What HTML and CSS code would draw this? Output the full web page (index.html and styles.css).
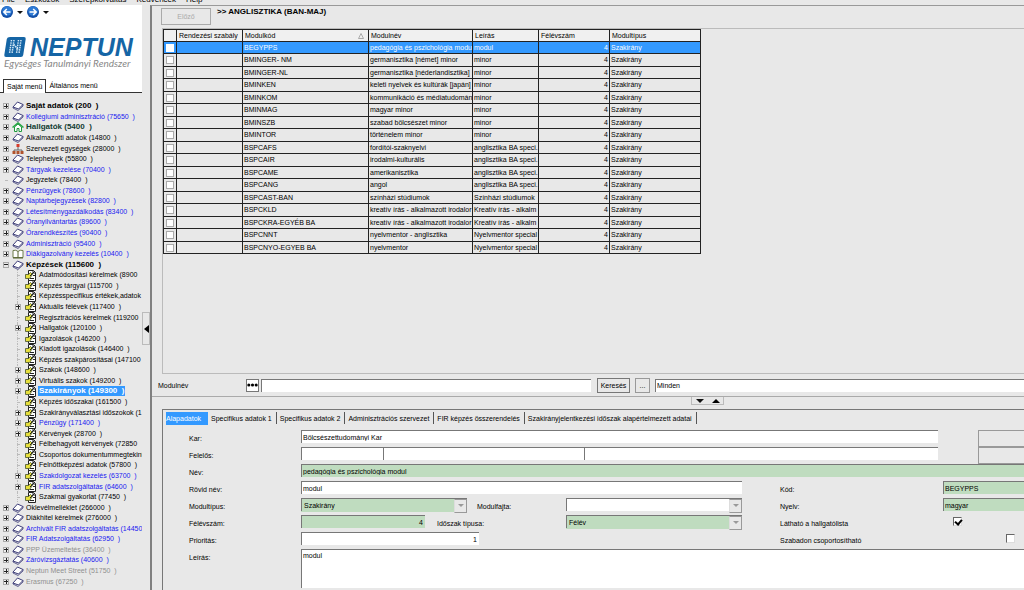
FILE: index.html
```
<!DOCTYPE html>
<html lang="hu">
<head>
<meta charset="utf-8">
<title>Neptun</title>
<link rel="stylesheet" href="styles.css">
</head>
<body>
<svg class="defs" aria-hidden="true">
  <symbol id="book" viewBox="0 0 12 10"><path d="M1 6 5.500 1 11 3.500 6.500 8z" fill="#fff" stroke="#3c3c78"/><path d="M1 6v1l5 2.500 5-4.500V3.500" fill="none" stroke="#3c3c78" stroke-width=".8"/></symbol>
  <symbol id="house" viewBox="0 0 12 10"><path d="M2.500 5v4.500H5V6.500h2v3h2.500V5L6 2z" fill="#fff" stroke="#1f9a3c"/><path d="M.5 5.500 6 1l5.500 4.500" fill="none" stroke="#27a544" stroke-width="1.600"/></symbol>
  <symbol id="org" viewBox="0 0 12 10"><path d="M6 3v3M2 8V6h8v2" fill="none" stroke="#666"/><path d="M4.500 0h3v3h-3z" fill="#d63a2a"/><path d="M.5 7h3v3h-3zM4.500 7h3v3h-3zM8.500 7h3v3h-3z" fill="#b0532c"/></symbol>
  <symbol id="open" viewBox="0 0 12 10"><path d="M1 1.500Q4 .5 6 2.500q2-2 5-1v7H1z" fill="#fff" stroke="#6d7a4a"/><path d="M6 2.500v6M1 9h10" stroke="#55622f"/></symbol>
  <symbol id="page" viewBox="0 0 12 11"><path d="M3.500.5h5l2 2v8h-7z" fill="#fff" stroke="#222"/><path d="M8 .5v2.500h2.500M5 8.500h4M8 5.500h2" fill="none" stroke="#222"/><path d="M.5 4.500h3l2-2 2 2-3 4h-4z" fill="#e6df3c" stroke="#45512a" stroke-width=".8"/><path d="M5 6 9 2" stroke="#222"/></symbol>
</svg>

<nav class="menubar"><span>File</span><span>Eszközök</span><span>Szerepkörváltás</span><span>Kedvencek</span><span>Help</span></nav>

<div class="app">
  <aside class="sidebar">
    <div class="brand">
      <div class="history">
        <button class="nav" aria-label="Vissza"><svg viewBox="0 0 12 12"><circle cx="6" cy="6" r="6" fill="#1450a8"/><circle cx="6" cy="5" r="4.800" fill="#2f7bd6"/><path d="M9.500 6H3M5.800 3 2.800 6l3 3" fill="none" stroke="#fff" stroke-width="1.500"/></svg></button>
        <i class="caret"></i>
        <button class="nav" aria-label="Előre"><svg viewBox="0 0 12 12"><circle cx="6" cy="6" r="6" fill="#1450a8"/><circle cx="6" cy="5" r="4.800" fill="#2f7bd6"/><path d="M2.500 6H9M6.200 3l3 3-3 3" fill="none" stroke="#fff" stroke-width="1.500"/></svg></button>
        <i class="caret"></i>
      </div>
      <div class="logo">
        <svg viewBox="0 0 22 20"><path d="M6 0h14q2 0 1.700 2l-2.500 16q-.3 2-2.300 2H2q-2 0-1.700-2L2.800 2Q3.200 0 6 0z" fill="#1565a5"/><path d="M7.500 3 5.500 16.500M10 3 8 16.500M14.500 3l-2 13.500M17 3l-2 13.500" stroke="#d5e8f6" stroke-width="1.500" stroke-dasharray="1.500 .8"/><path d="M9.500 7.500l5 5" stroke="#d5e8f6" stroke-width="1.800" stroke-dasharray="1.500 .8"/></svg>
        <strong>NEPTUN</strong>
      </div>
      <div class="slogan">Egységes Tanulmányi Rendszer</div>
      <div class="side-tabs"><button class="on">Saját menü</button><button>Általános menü</button></div>
    </div>
    <ul class="tree">
      <li class="bold"><i class="box"></i><svg><use href="#book"/></svg><span>Saját adatok (200  )</span></li>
      <li class="blue"><i class="box"></i><svg><use href="#book"/></svg><span>Kollégiumi adminisztráció (75650  )</span></li>
      <li class="bold green"><i class="box"></i><svg><use href="#house"/></svg><span>Hallgatók (5400  )</span></li>
      <li><i class="box"></i><svg><use href="#book"/></svg><span>Alkalmazotti adatok (14800  )</span></li>
      <li><i class="box"></i><svg><use href="#org"/></svg><span>Szervezeti egységek (28000  )</span></li>
      <li><i class="box"></i><svg><use href="#book"/></svg><span>Telephelyek (55800  )</span></li>
      <li class="blue"><i class="box"></i><svg><use href="#book"/></svg><span>Tárgyak kezelése (70400  )</span></li>
      <li><i class="box none"></i><svg><use href="#book"/></svg><span>Jegyzetek (78400  )</span></li>
      <li class="blue"><i class="box"></i><svg><use href="#book"/></svg><span>Pénzügyek (78600  )</span></li>
      <li class="blue"><i class="box"></i><svg><use href="#book"/></svg><span>Naptárbejegyzések (82800  )</span></li>
      <li class="blue"><i class="box"></i><svg><use href="#book"/></svg><span>Létesítménygazdálkodás (83400  )</span></li>
      <li class="blue"><i class="box"></i><svg><use href="#book"/></svg><span>Óranyilvántartás (89600  )</span></li>
      <li class="blue"><i class="box"></i><svg><use href="#book"/></svg><span>Órarendkészítés (90400  )</span></li>
      <li class="blue"><i class="box"></i><svg><use href="#book"/></svg><span>Adminisztráció (95400  )</span></li>
      <li class="blue"><i class="box"></i><svg><use href="#open"/></svg><span>Diákigazolvány kezelés (10400  )</span></li>
      <li class="bold"><i class="box minus"></i><svg><use href="#book"/></svg><span>Képzések (115600  )</span></li>
      <li class="child"><i class="box none"></i><svg><use href="#page"/></svg><span>Adatmódosítási kérelmek (8900</span></li>
      <li class="child"><i class="box none"></i><svg><use href="#page"/></svg><span>Képzés tárgyai (115700  )</span></li>
      <li class="child"><i class="box none"></i><svg><use href="#page"/></svg><span>Képzésspecifikus értékek,adatok</span></li>
      <li class="child"><i class="box"></i><svg><use href="#page"/></svg><span>Aktuális félévek (117400  )</span></li>
      <li class="child"><i class="box none"></i><svg><use href="#page"/></svg><span>Regisztrációs kérelmek (119200</span></li>
      <li class="child"><i class="box"></i><svg><use href="#page"/></svg><span>Hallgatók (120100  )</span></li>
      <li class="child"><i class="box none"></i><svg><use href="#page"/></svg><span>Igazolások (146200  )</span></li>
      <li class="child"><i class="box none"></i><svg><use href="#page"/></svg><span>Kiadott igazolások (146400  )</span></li>
      <li class="child"><i class="box none"></i><svg><use href="#page"/></svg><span>Képzés szakpárosításai (147100</span></li>
      <li class="child"><i class="box"></i><svg><use href="#page"/></svg><span>Szakok (148600  )</span></li>
      <li class="child"><i class="box"></i><svg><use href="#page"/></svg><span>Virtuális szakok (149200  )</span></li>
      <li class="child bold selected"><i class="box"></i><svg><use href="#page"/></svg><span>Szakirányok (149300  )</span></li>
      <li class="child"><i class="box none"></i><svg><use href="#page"/></svg><span>Képzés időszakai (161500  )</span></li>
      <li class="child"><i class="box"></i><svg><use href="#page"/></svg><span>Szakirányválasztási időszokok (1</span></li>
      <li class="child blue"><i class="box"></i><svg><use href="#page"/></svg><span>Pénzügy (171400  )</span></li>
      <li class="child"><i class="box"></i><svg><use href="#page"/></svg><span>Kérvények (28700  )</span></li>
      <li class="child"><i class="box none"></i><svg><use href="#page"/></svg><span>Félbehagyott kérvények (72850</span></li>
      <li class="child"><i class="box none"></i><svg><use href="#page"/></svg><span>Csoportos dokumentummegtekint</span></li>
      <li class="child"><i class="box none"></i><svg><use href="#page"/></svg><span>Felnőttképzési adatok (57800  )</span></li>
      <li class="child blue"><i class="box"></i><svg><use href="#page"/></svg><span>Szakdolgozat kezelés (63700  )</span></li>
      <li class="child blue"><i class="box"></i><svg><use href="#page"/></svg><span>FIR adatszolgáltatás (64600  )</span></li>
      <li class="child"><i class="box none"></i><svg><use href="#page"/></svg><span>Szakmai gyakorlat (77450  )</span></li>
      <li><i class="box"></i><svg><use href="#book"/></svg><span>Oklevélmelléklet (266000  )</span></li>
      <li><i class="box"></i><svg><use href="#book"/></svg><span>Diákhitel kérelmek (276000  )</span></li>
      <li class="blue"><i class="box"></i><svg><use href="#book"/></svg><span>Archivált FIR adatszolgáltatás (14450</span></li>
      <li class="blue"><i class="box"></i><svg><use href="#book"/></svg><span>FIR Adatszolgáltatás (62950  )</span></li>
      <li class="gray"><i class="box"></i><svg><use href="#book"/></svg><span>PPP Üzemeltetés (36400  )</span></li>
      <li class="blue"><i class="box"></i><svg><use href="#book"/></svg><span>Záróvizsgáztatás (40600  )</span></li>
      <li class="gray"><i class="box"></i><svg><use href="#book"/></svg><span>Neptun Meet Street (51750  )</span></li>
      <li class="gray"><i class="box"></i><svg><use href="#book"/></svg><span>Erasmus (67250  )</span></li>
    </ul>
  </aside>
  <div class="gutter"><button aria-label="Menü elrejtése"></button></div>

  <main class="main">
    <header class="head"><button class="prev" disabled>Előző</button><h1>&gt;&gt; ANGLISZTIKA (BAN-MAJ)</h1></header>
    <section class="list">
      <table>
        <colgroup><col class="c1"><col class="c2"><col class="c3"><col class="c4"><col class="c5"><col class="c6"><col class="c7"></colgroup>
        <thead><tr><th></th><th>Rendezési szabály</th><th><div class="sorted">Modulkód<svg viewBox="0 0 6 6"><path d="M3 .5 5.500 5.500h-5z" fill="none" stroke="#999" stroke-width=".8"/></svg></div></th><th>Modulnév</th><th>Leírás</th><th>Félévszám</th><th>Modultípus</th></tr></thead>
        <tbody>
          <tr class="current"><td><input type="checkbox" aria-label="BEGYPPS"></td><td></td><td>BEGYPPS</td><td>pedagógia és pszichológia modu</td><td>modul</td><td>4</td><td>Szakirány</td></tr>
          <tr><td><input type="checkbox" aria-label="BMINGER- NM"></td><td></td><td>BMINGER- NM</td><td>germanisztika [német] minor</td><td>minor</td><td>4</td><td>Szakirány</td></tr>
          <tr><td><input type="checkbox" aria-label="BMINGER-NL"></td><td></td><td>BMINGER-NL</td><td>germanisztika [néderlandisztika]</td><td>minor</td><td>4</td><td>Szakirány</td></tr>
          <tr><td><input type="checkbox" aria-label="BMINKEN"></td><td></td><td>BMINKEN</td><td>keleti nyelvek és kultúrák [japán]</td><td>minor</td><td>4</td><td>Szakirány</td></tr>
          <tr><td><input type="checkbox" aria-label="BMINKOM"></td><td></td><td>BMINKOM</td><td>kommunikáció és médiatudomán</td><td>minor</td><td>4</td><td>Szakirány</td></tr>
          <tr><td><input type="checkbox" aria-label="BMINMAG"></td><td></td><td>BMINMAG</td><td>magyar minor</td><td>minor</td><td>4</td><td>Szakirány</td></tr>
          <tr><td><input type="checkbox" aria-label="BMINSZB"></td><td></td><td>BMINSZB</td><td>szabad bölcsészet minor</td><td>minor</td><td>4</td><td>Szakirány</td></tr>
          <tr><td><input type="checkbox" aria-label="BMINTOR"></td><td></td><td>BMINTOR</td><td>történelem minor</td><td>minor</td><td>4</td><td>Szakirány</td></tr>
          <tr><td><input type="checkbox" aria-label="BSPCAFS"></td><td></td><td>BSPCAFS</td><td>fordítói-szaknyelvi</td><td>anglisztika BA speci.</td><td>4</td><td>Szakirány</td></tr>
          <tr><td><input type="checkbox" aria-label="BSPCAIR"></td><td></td><td>BSPCAIR</td><td>irodalmi-kulturális</td><td>anglisztika BA speci.</td><td>4</td><td>Szakirány</td></tr>
          <tr><td><input type="checkbox" aria-label="BSPCAME"></td><td></td><td>BSPCAME</td><td>amerikanisztika</td><td>anglisztika BA speci.</td><td>4</td><td>Szakirány</td></tr>
          <tr><td><input type="checkbox" aria-label="BSPCANG"></td><td></td><td>BSPCANG</td><td>angol</td><td>anglisztika BA speci.</td><td>4</td><td>Szakirány</td></tr>
          <tr><td><input type="checkbox" aria-label="BSPCAST-BAN"></td><td></td><td>BSPCAST-BAN</td><td>színházi stúdiumok</td><td>Színházi stúdiumok</td><td>4</td><td>Szakirány</td></tr>
          <tr><td><input type="checkbox" aria-label="BSPCKLD"></td><td></td><td>BSPCKLD</td><td>kreatív írás - alkalmazott irodalor</td><td>Kreatív írás - alkalm</td><td>4</td><td>Szakirány</td></tr>
          <tr><td><input type="checkbox" aria-label="BSPCKRA-EGYÉB BA"></td><td></td><td>BSPCKRA-EGYÉB BA</td><td>kreatív írás - alkalmazott irodalor</td><td>Kreatív írás - alkalm</td><td>4</td><td>Szakirány</td></tr>
          <tr><td><input type="checkbox" aria-label="BSPCNNT"></td><td></td><td>BSPCNNT</td><td>nyelvmentor - anglisztika</td><td>Nyelvmentor special</td><td>4</td><td>Szakirány</td></tr>
          <tr><td><input type="checkbox" aria-label="BSPCNYO-EGYEB BA"></td><td></td><td>BSPCNYO-EGYEB BA</td><td>nyelvmentor</td><td>Nyelvmentor special</td><td>4</td><td>Szakirány</td></tr>
        </tbody>
      </table>
    </section>

    <div class="search">
      <label for="q">Modulnév</label>
      <button class="dots" aria-label="Mezők"><svg viewBox="0 0 12 4"><circle cx="2" cy="2" r="1.700"/><circle cx="6" cy="2" r="1.700"/><circle cx="10" cy="2" r="1.700"/></svg></button>
      <input id="q" type="text">
      <button class="find">Keresés</button>
      <button class="more">...</button>
      <select class="all" aria-label="Szűrés"><option>Minden</option></select>
    </div>

    <div class="splitter"><button aria-label="Panel mozgatása"><i class="caret"></i><i class="caret up"></i></button></div>

    <section class="detail">
      <div class="tabs">
        <button class="on">Alapadatok</button><button>Specifikus adatok 1</button><button>Specifikus adatok 2</button><button>Adminisztrációs szervezet</button><button>FIR képzés összerendelés</button><button>Szakirányjelentkezési időszak alapértelmezett adatai</button>
      </div>
      <form class="form">
        <div class="row"><label for="kar">Kar:</label><input class="grow kar" id="kar" type="text" value="Bölcsészettudományi Kar"><button class="side" type="button" aria-label="Kar választása"></button></div>
        <div class="row"><label for="fel">Felelős:</label><div class="trio"><input id="fel" type="text"><input type="text" aria-label="Felelős neve"><input type="text" aria-label="Felelős adatai"></div><button class="side" type="button" aria-label="Felelős választása"></button></div>
        <div class="row"><label for="nev">Név:</label><input class="grow req" id="nev" type="text" value="pedagógia és pszichológia modul"></div>
        <div class="row"><label for="rov">Rövid név:</label><input class="grow" id="rov" type="text" value="modul"><label class="right" for="kod">Kód:</label><input class="code req" id="kod" type="text" value="BEGYPPS"></div>
        <div class="row"><label for="tip">Modultípus:</label><div class="pair"><span class="combo req w1"><select id="tip"><option>Szakirány</option></select></span><label for="faj">Modulfajta:</label><span class="combo grow"><select id="faj"><option></option></select></span></div><label class="right" for="nye">Nyelv:</label><select class="code req" id="nye"><option>magyar</option></select></div>
        <div class="row"><label for="fsz">Félévszám:</label><div class="pair"><span class="w1"><input class="num req" id="fsz" type="text" value="4"></span><label class="near" for="ido">Időszak típusa:</label><span class="combo req grow"><select id="ido"><option>Félév</option></select></span></div><label class="right" for="lat">Látható a hallgatólista</label><span class="code"><input class="tick" id="lat" type="checkbox" checked></span></div>
        <div class="row"><label for="pri">Prioritás:</label><div class="pair"><input class="prio" id="pri" type="text" value="1"></div><label class="right" for="sza">Szabadon csoportosítható</label><span class="code"><input class="tick far" id="sza" type="checkbox"></span></div>
        <div class="row tall"><label for="lei">Leírás:</label><textarea class="grow" id="lei">modul</textarea></div>
      </form>
    </section>
  </main>
</div>
</body>
</html>
```

FILE: styles.css
```
* { box-sizing: border-box; }
body {
  margin: 0; height: 100vh; overflow: hidden; display: flex; flex-direction: column;
  background: #e8e8e8; color: #000; font: 7px/11px "Liberation Sans", sans-serif;
}
button, input, select, textarea { font: inherit; color: inherit; margin: 0; padding: 0; border-radius: 0; appearance: none; min-width: 0; }
button { background: #e8e8e8; border: 1px solid #999; }
input[type=text], select, textarea { background: #fff; border: 0 solid #777; border-width: 1px 0 0 1px; padding-left: 1px; height: 13px; line-height: 11px; }
.defs { display: none; }

.menubar { height: 5px; overflow: hidden; display: flex; align-items: flex-end; gap: 10px; padding-left: 2px; flex: none; font-size: 8px; }
.menubar span { line-height: 11px; height: 11px; }

.app { flex: 1; min-height: 0; display: flex; }
.sidebar { width: 142px; flex: none; display: flex; flex-direction: column; overflow: hidden; }
.brand { background: #fff; height: 88px; flex: none; display: flex; flex-direction: column; }
.history { display: flex; align-items: center; gap: 4px; height: 14px; padding-left: 1px; }
.nav { width: 12px; height: 12px; border: 0; background: none; }
.nav svg { display: block; width: 12px; height: 12px; }
.caret { border: 2px solid transparent; border-width: 3px 3px 0; border-top-color: #111; }
.caret.up { border-width: 0 3px 3px; border-bottom-color: #000; }
.logo { display: flex; align-items: center; gap: 4px; padding: 18px 0 0 4px; height: 38px; }
.logo svg { width: 22px; height: 20px; flex: none; }
.logo strong { font: italic bold 25px/20px "Liberation Sans", sans-serif; color: #1565a5; }
.slogan { padding-left: 4px; color: #888; font: italic 10px/12px Lato, sans-serif; white-space: nowrap; }
.side-tabs { margin-top: auto; display: flex; padding-left: 3px; border-bottom: 1px solid #333; height: 14px; }
.side-tabs button { border: 0; background: none; padding: 0 3px; white-space: nowrap; }
.side-tabs .on { border: 1px solid #333; border-bottom: 0; height: 14px; background: #fff; }

.tree { flex: 1; min-height: 0; margin: 0; padding: 8px 0 3px 3px; list-style: none; display: flex; flex-direction: column; }
.tree li { flex: 1 1 0; min-height: 0; display: flex; align-items: center; white-space: pre; }
.tree svg { width: 12px; height: 10px; margin: 0 1px 0 3px; flex: none; }
.tree span { padding: 0 1px; line-height: 10px; }
.tree .child { padding-left: 12px; position: relative; }
.tree .child svg { height: 11px; margin-left: 4px; }
.tree .child::before { content: ""; position: absolute; left: 14px; top: 0; bottom: 0; border-left: 1px dotted #bbb; }
.box { width: 6px; height: 6px; flex: none; border: 1px solid #aaa; background: linear-gradient(#222, #222) center / 4px 1px no-repeat, linear-gradient(#222, #222) center / 1px 4px no-repeat, #eee; position: relative; }
.box.minus { background: linear-gradient(#222, #222) center / 4px 1px no-repeat; }
.box.none { border-color: transparent; background: linear-gradient(#bbb, #bbb) right / 3px 1px no-repeat; }
.bold { font-weight: bold; font-size: 8px; }
.blue { color: #2020f0; }
.green { color: #123c32; }
.gray { color: #909090; }
.selected span { background: #3399ff; color: #fff; }

.gutter { width: 8px; flex: none; padding-top: 307px; }
.gutter button { width: 8px; height: 33px; display: flex; align-items: center; justify-content: center; border-color: #bbb; }
.gutter button::before { content: ""; border: 4px solid transparent; border-width: 4px 5px 4px 0; border-right-color: #000; }

.main { flex: 1; min-width: 0; border-left: 2px solid #808080; border-top: 1px solid #999; display: flex; flex-direction: column; }
.head { display: flex; gap: 6px; padding: 2px 0 0 9px; height: 22px; flex: none; }
.prev { width: 50px; height: 17px; color: #aaa; border: 1px solid #aaa; }
h1 { margin: 0; font: bold 8px/8px "Liberation Sans", sans-serif; }
.list { flex: 1; min-height: 0; margin-left: 10px; border: solid #bbb; border-width: 1px 0 1px 1px; }
table { border-collapse: collapse; table-layout: fixed; width: 537px; }
.c1 { width: 13px; } .c2 { width: 66px; } .c3 { width: 126px; } .c4 { width: 104px; } .c5 { width: 66px; } .c6 { width: 71px; } .c7 { width: 91px; }
th, td { border: 1px solid #222; padding: 0 1px; height: 12px; line-height: 10px; overflow: hidden; white-space: nowrap; text-align: left; font-weight: normal; }
tbody tr:nth-child(even) td { height: 13px; }
th { background: #f0f0f0; padding: 0 2px; }
td:nth-child(6) { text-align: right; }
.sorted { display: flex; align-items: center; justify-content: space-between; }
.sorted svg { width: 6px; height: 6px; margin-right: 2px; }
.current td { background: #3399ff; color: #fff; }
td input { display: block; width: 8px; height: 8px; margin: 0 auto; background: #fff; border: 1px solid #aaa; }
.current input { border-color: #fff; }

.search { display: flex; align-items: center; height: 22px; padding-left: 6px; flex: none; }
.search label { width: 88px; }
.dots { width: 13px; height: 13px; margin-right: 2px; background: #fff; border-color: #777; }
.dots svg { display: block; width: 11px; height: 4px; }
.search input { width: 330px; margin-right: 6px; }
.find { width: 33px; height: 15px; margin-right: 5px; border-color: #777; }
.more { width: 15px; height: 15px; margin-right: 5px; }
.all { flex: 1; }

.splitter { height: 13px; border-top: 1px solid #aaa; padding-left: 539px; flex: none; }
.splitter button { width: 33px; height: 8px; border-top: 0; border-color: #bbb; display: flex; align-items: center; justify-content: center; gap: 8px; }
.splitter .caret { border-left-width: 4px; border-right-width: 4px; }
.splitter .caret:not(.up) { border-top-width: 4px; }
.splitter .up { border-bottom-width: 4px; }

.detail { margin-left: 10px; border: solid #777; border-width: 1px 0 0 1px; flex: none; }
.tabs { display: flex; padding: 2px 0 0 3px; height: 16px; }
.tabs button { border: 0; border-right: 1px solid #555; padding: 2px 4px 0 3px; height: 12px; line-height: 10px; white-space: nowrap; }
.tabs .on { background: #3399ff; color: #fff; padding: 0 6px 0 0; height: 13px; border-right-color: #3399ff; }
.form { display: flex; flex-direction: column; gap: 4px; padding: 4px 0 2px 26px; }
.row { display: flex; align-items: flex-start; height: 13px; }
.row > label:first-child { width: 112px; flex: none; }
.row label { padding-top: 3px; white-space: nowrap; }
.grow { flex: 1; }
.kar { border-left-color: #c66; }
.row .req, .combo.req select { background: #bfdcbf; }
.side { width: 46px; height: 17px; margin-left: 40px; border-right: 0; }
.trio { flex: 1; display: grid; grid-template-columns: 82px 201px 1fr; }
.right { width: 201px; padding-left: 38px; flex: none; }
.code { width: 81px; flex: none; }
.pair { flex: 1; display: flex; }
.combo { display: flex; position: relative; }
.combo select { flex: 1; padding-left: 2px; }
.combo::after { content: ""; position: absolute; right: 0; top: 1px; width: 11px; height: 12px; border: 1px solid #999; border-left-color: #ddd; background: #e8e8e8; }
.combo::before { content: ""; position: absolute; z-index: 1; right: 3px; top: 6px; border: 3px solid transparent; border-width: 3px 3px 0; border-top-color: #999; }
.w1 { width: 166px; flex: none; }
.pair label { width: 99px; padding-left: 10px; }
.pair .w1:not(.combo) { width: 126px; }
.num { width: 124px; text-align: right; }
.pair .near { width: 139px; }
.prio { width: 178px; text-align: right; }
.row input.num, .row input.prio { padding-right: 2px; }
.tick { display: block; width: 9px; height: 9px; margin: 2px 0 0 10px; background: #fff; border: 1px solid #ddd; border-top-color: #666; border-left-color: #666; }
.tick.far { margin-left: 63px; }
.tick:checked::before { content: ""; display: block; width: 3px; height: 5px; margin-left: 2px; border: solid #000; border-width: 0 2px 2px 0; transform: rotate(40deg); }
.tall { height: 39px; }
.tall textarea { height: 39px; resize: none; }
```
